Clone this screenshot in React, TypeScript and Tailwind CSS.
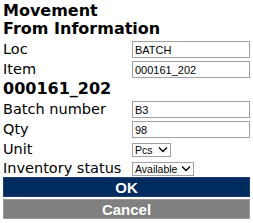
const rows = [
  { label: "Loc", value: "BATCH" },
  { label: "Item", value: "000161_202" },
];

const rows2 = [
  { label: "Batch number", value: "B3" },
  { label: "Qty", value: "98" },
];

function Chevron() {
  return (
    <svg width="10" height="7" viewBox="0 0 10 7" className="ml-auto mr-[2px] shrink-0">
      <path d="M1 1.5 L5 5.5 L9 1.5" fill="none" stroke="#000" strokeWidth="1.4" />
    </svg>
  );
}

function FakeSelect({ value, width }: { value: string; width: string }) {
  return (
    <div
      className={`flex items-center gap-[4px] h-[14px] border border-[#a0a0a0] bg-white pl-[2px] text-[10.5px] leading-none font-['Liberation_Sans',Arial,sans-serif] ${width}`}
    >
      <span>{value}</span>
      <Chevron />
    </div>
  );
}

function Field({ label, value }: { label: string; value: string }) {
  return (
    <div className="grid grid-cols-[129px_1fr] items-center h-[20px]">
      <span>{label}</span>
      <input
        readOnly
        value={value}
        className="h-[17px] w-[118px] border border-[#a0a0a0] bg-white px-[2px] text-[11px] text-black font-['Liberation_Sans',Arial,sans-serif] outline-none"
      />
    </div>
  );
}

export default function App() {
  return (
    <div className="w-[253px] h-[223px] bg-white pl-[3px] pr-[3px] text-black text-[14.5px] font-['DejaVu_Sans',Verdana,sans-serif]">
      <h2 className="h-[19px] leading-[22px] text-[16px] font-bold">Movement</h2>
      <h2 className="h-[20px] leading-[20px] text-[16px] font-bold">From Information</h2>
      {rows.map((r) => (
        <Field key={r.label} label={r.label} value={r.value} />
      ))}
      <h2 className="h-[20px] leading-[20px] text-[16px] font-bold">000161_202</h2>
      {rows2.map((r) => (
        <Field key={r.label} label={r.label} value={r.value} />
      ))}
      <div className="grid grid-cols-[129px_1fr] items-center h-[19px]">
        <span>Unit</span>
        <FakeSelect value="Pcs" width="w-[39px]" />
      </div>
      <div className="grid grid-cols-[129px_1fr] items-center h-[19px]">
        <span>Inventory status</span>
        <FakeSelect value="Available" width="w-[62px]" />
      </div>
      <div className="flex flex-col gap-[2px] w-[247px] font-['Liberation_Sans',Arial,sans-serif] font-bold text-[15px] text-white">
        <button className="h-[20px] bg-[#002b5e] border border-[#1a4070] leading-none">OK</button>
        <button className="h-[20px] bg-[#808080] border border-[#9a9a9a] leading-none">Cancel</button>
      </div>
    </div>
  );
}
